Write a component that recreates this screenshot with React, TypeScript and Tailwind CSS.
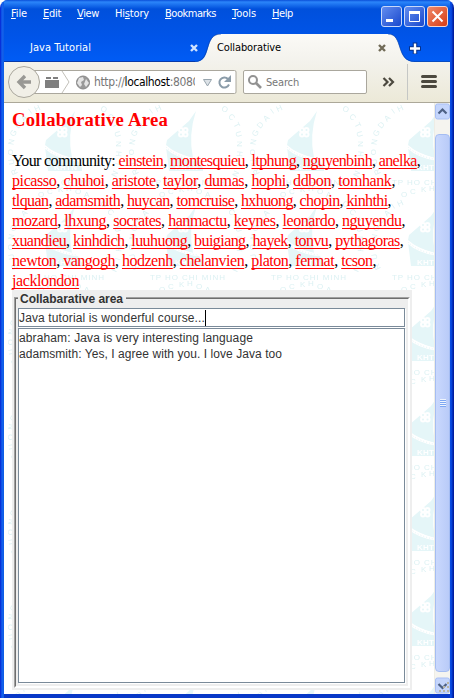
import React, { useLayoutEffect, useRef } from "react";

const rows: [number, string[]][] = [
  [408, ["einstein", "montesquieu", "ltphung", "nguyenbinh", "anelka"]],
  [383, ["picasso", "chuhoi", "aristote", "taylor", "dumas", "hophi", "ddbon", "tomhank"]],
  [379, ["tlquan", "adamsmith", "huycan", "tomcruise", "hxhuong", "chopin", "kinhthi"]],
  [393, ["mozard", "lhxung", "socrates", "hanmactu", "keynes", "leonardo", "nguyendu"]],
  [391, ["xuandieu", "kinhdich", "luuhuong", "buigiang", "hayek", "tonvu", "pythagoras"]],
  [364, ["newton", "vangogh", "hodzenh", "chelanvien", "platon", "fermat", "tcson"]],
  [67, ["jacklondon"]],
];

// text before the access key, access key, rest, gap after the item, width
const menus: [string, string, string, number, number][] = [
  ["", "F", "ile", 16, 16],
  ["", "E", "dit", 16, 18],
  ["", "V", "iew", 16, 22],
  ["Hi", "s", "tory", 16, 34],
  ["", "B", "ookmarks", 16, 51],
  ["", "T", "ools", 16, 24],
  ["", "H", "elp", 0, 21],
];

/* Spaces a line's letters so that it fills the given width */
function Fit({ w, className = "", children }: { w: number; className?: string; children: React.ReactNode }) {
  const ref = useRef<HTMLSpanElement>(null);
  useLayoutEffect(() => {
    const el = ref.current;
    if (!el) return;
    el.style.letterSpacing = "0px";
    const n = (el.textContent ?? "").length;
    el.style.letterSpacing = `${(w - el.getBoundingClientRect().width) / n}px`;
  }, [w]);
  return (
    <div className={`whitespace-pre ${className}`}>
      <span ref={ref} className="inline-block">{children}</span>
    </div>
  );
}

function Watermark() {
  const ring: [string, number, number, number][] = [
    ["G", 9, 33, -65], ["D", 14, 25, -52], ["A", 20, 18, -42], ["I", 26, 11, -35], ["H", 33, 8, -25],
    ["N", 7, 42, -80], ["O", 6, 52, -90], ["U", 7, 62, -100], ["R", 10, 72, -115],
    ["O", 100, 9, 30], ["C", 107, 17, 45], ["T", 112, 25, 62], ["U", 114, 34, 75], ["N", 115, 44, 90], ["H", 115, 54, 95], ["I", 114, 64, 105], ["N", 111, 74, 115],
  ];
  return (
    <svg className="absolute inset-0 h-full w-full" aria-hidden="true">
      <defs>
        <pattern id="boat" width="121" height="95" patternUnits="userSpaceOnUse">
          <path d="M71 8 64 18 42 37 41 42Q49 50 68 55Q63 32 71 8Z" fill="#e5f6f8" />
          <path d="M41 44Q52 55 74 58L78 65V68H44Z" fill="#e5f6f8" />
          <g fill="#fff">
            <circle cx="56" cy="27" r="3" /><circle cx="60.500" cy="27" r="3" /><circle cx="56" cy="31.500" r="3" /><circle cx="60.500" cy="31.500" r="3" />
          </g>
          <g fill="#e5f6f8">
            <circle cx="56" cy="27" r="1" /><circle cx="60.500" cy="27" r="1" /><circle cx="56" cy="31.500" r="1" /><circle cx="60.500" cy="31.500" r="1" />
          </g>
          <path d="M41 44Q51 54 72 57" fill="none" stroke="#fff" strokeWidth="2.500" />
          <path d="M41 44Q51 54 72 57" fill="none" stroke="#e5f6f8" strokeWidth="1" strokeDasharray="1 2" />
          <g fontFamily="Liberation Sans">
            <text x="50" y="67" fontSize="8" fontWeight="700" fill="#fff" textLength="23">KHTN</text>
            <g fill="#dcf1f3" fontSize="8">
              <text x="25" y="82" textLength="75">TP HO CHI MINH</text>
              {ring.map(([c, x, y, r], i) => <text key={i} x={x} y={y} textAnchor="middle" transform={`rotate(${r} ${x} ${y - 3})`}>{c}</text>)}
              <text x="34" y="94">O</text><text x="43" y="91">C</text><text x="54" y="89">K</text><text x="62" y="88">H</text><text x="71" y="91">O</text><text x="80" y="94">A</text>
            </g>
          </g>
        </pattern>
      </defs>
      <rect width="100%" height="100%" fill="url(#boat)" />
    </svg>
  );
}

function MenuBar() {
  return (
    <div className="flex h-[34px] w-full items-start justify-between pr-[2px] pl-[7px] text-white">
      <div className="flex pt-[6px] text-[11px] leading-4">
        {menus.map(([a, u, b, gap, w]) => (
          <div key={u} className="flex" style={{ width: w + gap }}>
            <Fit w={w}>{a}<span className="underline decoration-1 underline-offset-1">{u}</span>{b}</Fit>
          </div>
        ))}
      </div>
      <div className="flex gap-[2px] pt-[6px]">
        <svg width="21" height="21"><rect x=".5" y=".5" width="20" height="20" rx="2.5" fill="url(#blueBtn)" stroke="#c8d8fa" /><path d="M5 14.500h7" stroke="#fff" strokeWidth="3" /></svg>
        <svg width="21" height="21"><rect x=".5" y=".5" width="20" height="20" rx="2.5" fill="url(#blueBtn)" stroke="#c8d8fa" /><path d="M5.500 6v9.500h10V6" fill="none" stroke="#fff" /><path d="M5 6.500h11" stroke="#fff" strokeWidth="3" /></svg>
        <svg width="21" height="21"><rect x=".5" y=".5" width="20" height="20" rx="2.5" fill="url(#redBtn)" stroke="#f5d5cd" /><path d="m5.500 5.500 10 10m0-10-10 10" stroke="#fff" strokeWidth="2" /></svg>
      </div>
    </div>
  );
}

function Tabs() {
  return (
    <div className="relative h-7 w-full">
      <svg className="block" width="446" height="28">
        <path d="M0 27.500H191" stroke="#073aa9" />
        <path d="M191 28C209 28 199 0 217 0H384C400 0 391 28 411 28Z" fill="url(#tab)" />
        <path d="M191 27.500C208 27 199 0 217 0M384 0C400 0 391 27.500 411 27.500H446" stroke="#0b3f9e" strokeOpacity=".6" fill="none" />
        <path d="m187 11 6 6m0-6-6 6" stroke="#cfe2ff" strokeWidth="2.400" />
        <path d="m375 11 6 6m0-6-6 6" stroke="#716b57" strokeWidth="2.400" />
        <path d="M411 8.500v11.500m-6-5.500h12" stroke="#07318b" strokeWidth="4.500" />
        <path d="M411 9.500v10m-5-5h10" stroke="#fff" strokeWidth="2.400" />
      </svg>
      <Fit w={61} className="absolute top-[6px] left-[26px] text-[11px] leading-4 text-white">Java Tutorial</Fit>
      <Fit w={64} className="absolute top-[6px] left-[213px] text-[11px] leading-4 text-black">Collaborative</Fit>
    </div>
  );
}

function Toolbar() {
  return (
    <div className="relative h-[41px] w-full border-b border-[#aca899] bg-gradient-to-b from-[#f3f2ec] to-[#ece9d8]">
      <svg className="block" width="446" height="40">
        <rect x="20" y="8.500" width="212" height="23" rx="1.500" fill="#fff" stroke="#aaa79d" />
        <path d="M36 9h22l7 11-7 11H34" fill="#fff" />
        <circle cx="20" cy="20" r="15.500" fill="#f1efe7" stroke="#aaa79d" />
        <path d="M27 20H16m5-6-6 6 6 6" fill="none" stroke="#999894" strokeWidth="3.400" />
        <path d="m58 9 7 11-7 11" fill="none" stroke="#c2c0b9" />
        <path d="M41 18h14v8H41zM42 15h5v2h-5zm7 0h5v2h-5z" fill="#7f7f7f" />
        <circle cx="79" cy="20.500" r="6.500" fill="#999" stroke="#888" />
        <path d="m75 16 4-1 1 3-3 2 1 3-2 2-3-4zm7 1 3 4-3 4-2-3z" fill="#e4e4e4" />
        <path d="M199.500 17.500h8l-4 6.500z" fill="#dce2e7" stroke="#98a5ae" />
        <path d="M225 22.500a5 5 0 1 1-1-5.500" fill="none" stroke="#8b9ca9" strokeWidth="2" /><path d="M227 13v7h-7z" fill="#8b9ca9" />
        <rect x="239.500" y="8.500" width="123" height="23" rx="1.500" fill="#fff" stroke="#aaa79d" />
        <circle cx="249" cy="18" r="4" fill="none" stroke="#929292" strokeWidth="2" /><path d="m252 21 5 5" stroke="#929292" strokeWidth="2.600" />
        <path d="m379.500 16 4 4-4 4m5.500-8 4 4-4 4" fill="none" stroke="#4c493f" strokeWidth="2.200" />
        <path d="M403.500 2v36" stroke="#c5c7c5" />
        <path d="M418.500 14.500h13m-13 5h13m-13 5h13" stroke="#4c493f" strokeWidth="3" strokeLinecap="round" />
      </svg>
      <div className="absolute top-[12px] left-[90px] w-[101px] overflow-hidden">
        <Fit w={105} className="text-[12px] leading-4 text-[#777]">http://<span className="text-black">localhost</span>:8080</Fit>
      </div>
      <Fit w={33} className="absolute top-[13px] left-[262px] text-[11px] leading-4 text-[#777]">Search</Fit>
    </div>
  );
}

function Scrollbar() {
  return (
    <div className="flex h-full w-[16px] flex-col border-l border-[#eeede5] bg-[#f5f4ef]">
      <svg width="15" height="17"><rect x=".5" y="1" width="14" height="15" rx="2" fill="#c4d5fc" stroke="#a9c0f5" /><path d="m3.500 10.500 4-4 4 4" fill="none" stroke="#4d6185" strokeWidth="2.200" /></svg>
      <div className="mt-[14px] flex h-[538px] w-[15px] flex-col items-center justify-center rounded-sm border border-[#a5bdf2] bg-gradient-to-r from-[#c9d8fd] to-[#b9cbf8]">
        {[0, 1, 2, 3].map((n) => <i key={n} className="block h-[2px] w-[6px] border-t border-[#eef4fe] bg-[#7fa7f2]" />)}
      </div>
      <svg className="mt-[5px]" width="15" height="17">
        <rect x=".5" y="1" width="14" height="15" rx="2" fill="#c4d5fc" stroke="#a9c0f5" />
        <path d="m3.500 7 4 4 4-4" fill="none" stroke="#4d6185" strokeWidth="2.200" />
        <path d="M12 5h2v2h-2zM8 9h2v2H8zm4 0h2v2h-2zM4 13h2v2H4zm4 0h2v2H8zm4 0h2v2h-2z" fill="#b8b4a3" />
      </svg>
    </div>
  );
}

function ChatPanel() {
  return (
    <section className="relative -mt-px h-[400px] w-[400px] shrink-0 bg-[#eeeeee] px-[2px] pt-[7px] pb-[2px] font-['Liberation_Sans',sans-serif] text-[12px] text-[#333]">
      <div className="h-[391px] border border-t-[#a0a0a0] border-r-white border-b-white border-l-[#a0a0a0]">
        <div className="h-full border border-t-[#6e6e6e] border-r-white border-b-white border-l-[#6e6e6e] px-[2px] pt-[9px]">
          <div className="h-[19px] w-[387px] border border-[#7a8a99] bg-white shadow-[1px_1px_0_#fff]">
            <div className="flex h-full items-center pt-px">
              <Fit w={186} className="leading-4">Java tutorial is wonderful course...</Fit>
              <i className="block h-4 w-px bg-black" />
            </div>
          </div>
          <div className="mt-px h-[355px] w-[387px] border border-[#7a8a99] bg-white pt-px leading-4 shadow-[1px_1px_0_#fff]">
            <Fit w={234}>abraham: Java is very interesting language</Fit>
            <Fit w={263}>adamsmith: Yes, I agree with you. I love Java too</Fit>
          </div>
        </div>
      </div>
      <Fit w={103} className="absolute top-[2px] left-[6px] w-[108px] bg-[#eeeeee] pl-[2px] leading-[15px] font-bold">Collabarative area</Fit>
    </section>
  );
}

export default function App() {
  return (
    <div className="h-[698px] w-[454px] overflow-hidden rounded-t-lg bg-[linear-gradient(90deg,#0831d9_0,#0831d9_1px,#0b4ae4_1px,#1666ee_3px,#0855dd_4px,#0855dd_450px,#0a4fe6_450px,#0441d8_452px,#001da0_453px)] px-1">
      <div className="relative flex h-full flex-col border-b-4 border-[#0738c8] bg-[linear-gradient(#0a4fd8_0,#2b85fa_2px,#0050dc_9px,#0055ea_40px,#005cf5_62px)] font-['DejaVu_Sans_Condensed','DejaVu_Sans',sans-serif] font-normal">
        <svg className="absolute h-0 w-0"><defs>
          <linearGradient id="blueBtn" x2="1" y2="1"><stop stopColor="#648ef0" /><stop offset="1" stopColor="#1747cc" /></linearGradient>
          <linearGradient id="redBtn" x2="1" y2="1"><stop stopColor="#f08b6c" /><stop offset="1" stopColor="#d73b12" /></linearGradient>
          <linearGradient id="tab" x2="0" y2="1"><stop stopColor="#fbfaf7" /><stop offset="1" stopColor="#f3f2ec" /></linearGradient>
        </defs></svg>
        <MenuBar />
        <Tabs />
        <Toolbar />
        <div className="flex min-h-0 flex-1 bg-white">
          <main className="relative min-w-0 flex-1 overflow-hidden">
            <Watermark />
            <div className="relative flex h-full flex-col pl-2 font-['Liberation_Serif',serif] text-black">
              <h1 className="mt-[5px] h-[43px] shrink-0 text-[18.7px] leading-[23px] font-bold text-[#f00]"><Fit w={156}>Collaborative Area</Fit></h1>
              {rows.map(([w, names], i) => (
                <Fit key={i} w={w} className="h-5 shrink-0 text-[16px] leading-5">
                  {i === 0 && "Your community: "}
                  {names.map((n, j) => (
                    <React.Fragment key={n}>
                      <a className="text-[#f00] underline decoration-1 underline-offset-2 [text-decoration-skip-ink:none]">{n}</a>
                      {i < 6 && (j < names.length - 1 ? ", " : ",")}
                    </React.Fragment>
                  ))}
                </Fit>
              ))}
              <ChatPanel />
            </div>
          </main>
          <Scrollbar />
        </div>
      </div>
    </div>
  );
}
